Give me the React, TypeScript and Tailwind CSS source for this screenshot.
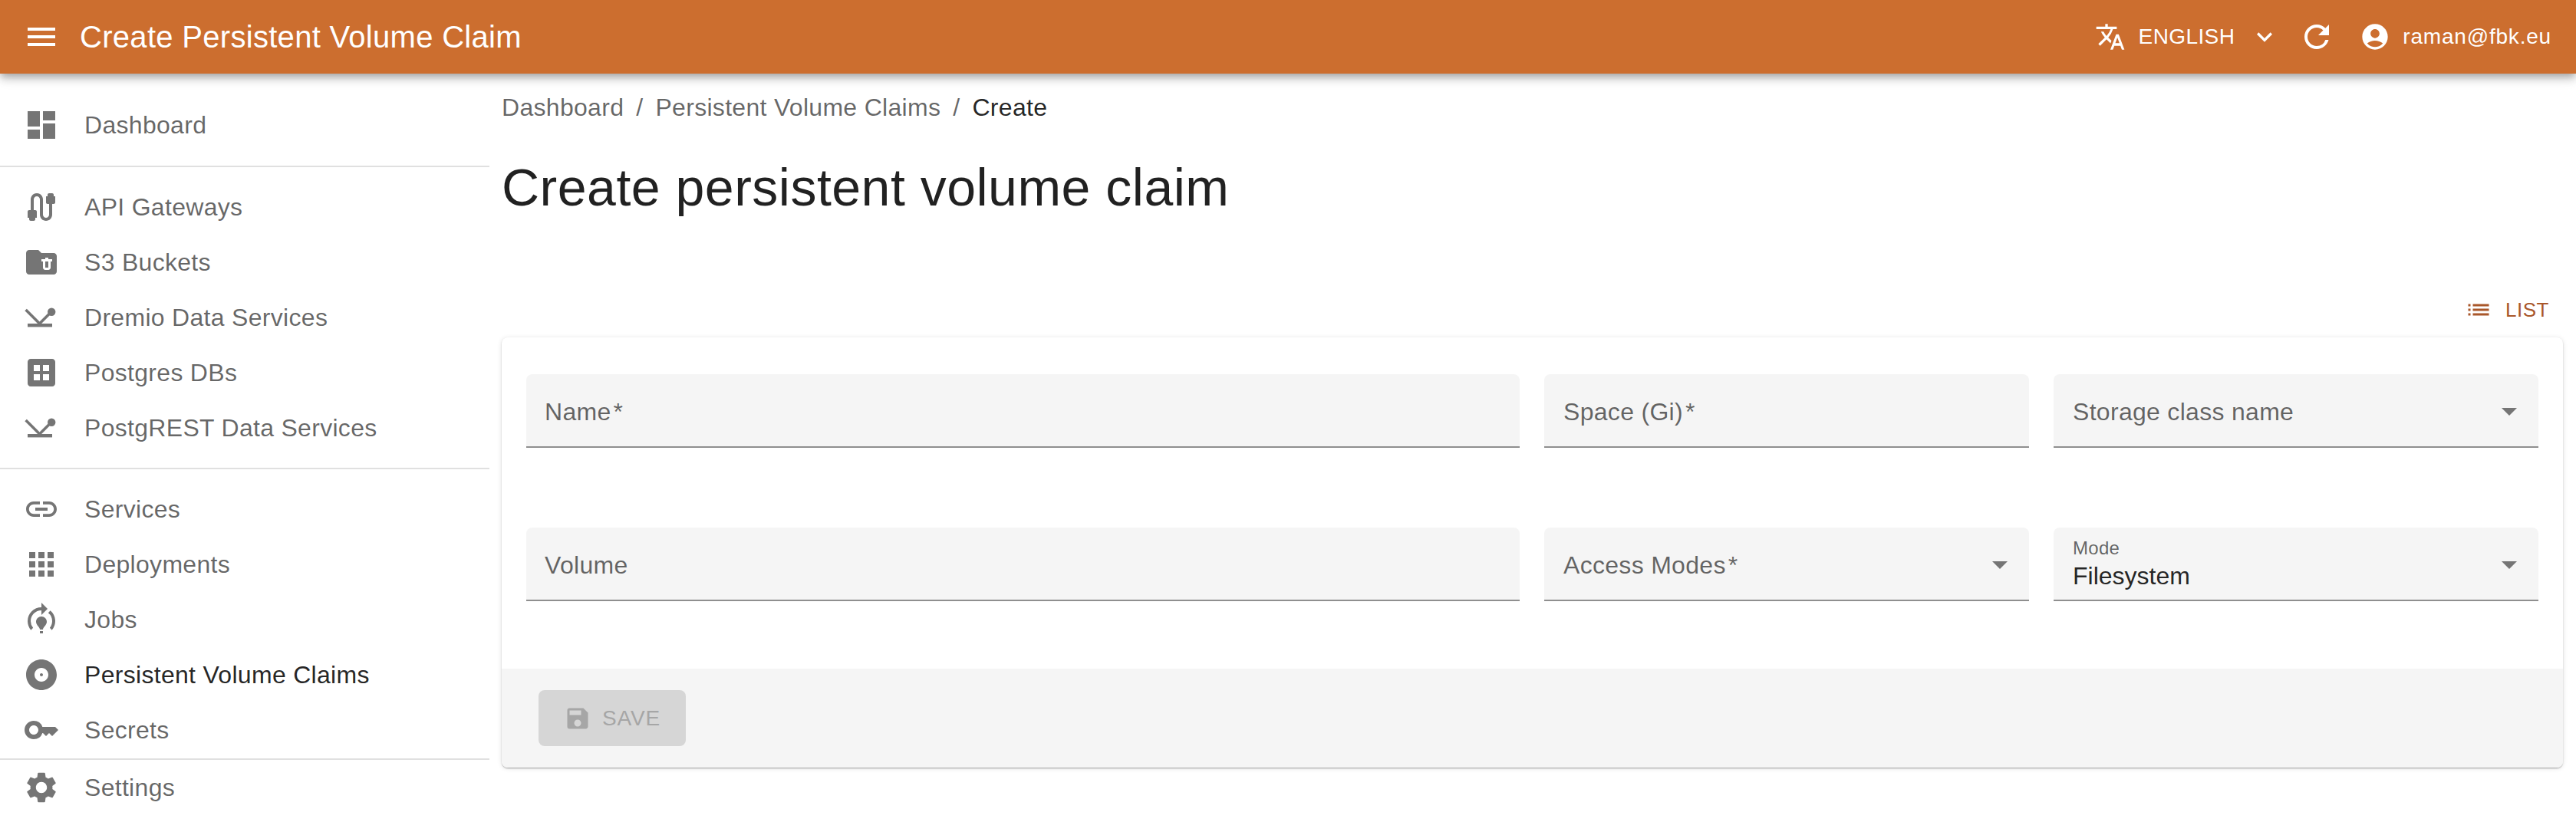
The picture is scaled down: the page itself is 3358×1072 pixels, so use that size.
import React from 'react';
import {
  MdMenu, MdTranslate, MdExpandMore, MdRefresh, MdAccountCircle, MdDashboard, MdCable, MdFolderDelete,
  MdDataset, MdLink, MdApps, MdModelTraining, MdAlbum, MdKey, MdSettings, MdList, MdSave, MdArrowDropDown,
} from 'react-icons/md';

const DataIcon = ({ className }: { className?: string }) => (
  <svg viewBox="0 0 24 24" fill="currentColor" className={className}>
    <path d="M1.8 7 10.8 16 18.4 8.4" fill="none" stroke="currentColor" strokeWidth="1.8" />
    <circle cx="18.6" cy="8.4" r="2.6" />
    <rect x="3" y="16" width="16" height="2.2" />
  </svg>
);

const Separator = () => <div className="h-[2px] w-[638px] bg-[#e0e0e0]" />;

const NavItem = ({ icon: Icon, label, active }: { icon: React.ComponentType<{ className?: string }>; label: string; active?: boolean }) => (
  <div className={`flex h-[72px] items-center pl-[30px] text-[32px] tracking-[0.3px] ${active ? 'text-[#000000de]' : 'text-[#00000099]'}`}>
    <Icon className="h-[48px] w-[48px] shrink-0 text-[#757575]" />
    <span className="ml-[32px]">{label}</span>
  </div>
);

const Field = ({ label, small, value, select, className }: { label: string; small?: string; value?: string; select?: boolean; className?: string }) => (
  <div className={`relative h-[96px] rounded-t-[8px] border-b-2 border-[#8f8f8f] bg-[#f5f5f5] ${className ?? 'pl-[24px]'}`}>
    {small ? (
      <div className="flex h-full flex-col pt-[11px]">
        <span className="text-[24px] leading-[32px] tracking-[0.3px] text-[#00000099]">{small}</span>
        <span className="text-[32px] leading-[40px] text-[#000000de]">{value}</span>
      </div>
    ) : (
      <div className="flex h-full items-center pt-[3px] text-[32px] tracking-[0.3px] text-[#00000099]">{label}</div>
    )}
    {select && <MdArrowDropDown className="absolute right-[14px] top-[24px] h-[48px] w-[48px] text-[#757575]" />}
  </div>
);

export default function App() {
  return (
    <div className="flex h-[1072px] w-[3358px] flex-col overflow-hidden bg-white font-['Liberation_Sans',Arial,sans-serif]">
      <header className="relative z-10 flex h-[96px] shrink-0 items-center bg-[#cc6e2f] pl-[30px] pr-[32px] text-white shadow-[0_4px_8px_-2px_rgba(0,0,0,0.2),0_8px_10px_0_rgba(0,0,0,0.14),0_2px_20px_0_rgba(0,0,0,0.12)]">
        <MdMenu className="h-[48px] w-[48px]" />
        <h1 className="ml-[26px] text-[40px] tracking-[0.3px]">Create Persistent Volume Claim</h1>
        <div className="ml-auto flex items-center">
          <MdTranslate className="h-[40px] w-[40px]" />
          <span className="ml-[17px] text-[28px] tracking-[0.4px]">ENGLISH</span>
          <MdExpandMore className="ml-[19px] h-[40px] w-[40px]" />
          <MdRefresh className="ml-[24px] h-[48px] w-[48px]" />
          <MdAccountCircle className="ml-[32px] h-[40px] w-[40px]" />
          <span className="ml-[16px] text-[28px] tracking-[0.8px]">raman@fbk.eu</span>
        </div>
      </header>
      <div className="flex min-h-0 flex-1">
        <aside className="w-[640px] shrink-0">
          <div className="pt-[31px]">
            <NavItem icon={MdDashboard} label="Dashboard" />
          </div>
          <div className="mt-[17px]"><Separator /></div>
          <div className="pt-[16px]">
            <NavItem icon={MdCable} label="API Gateways" />
            <NavItem icon={MdFolderDelete} label="S3 Buckets" />
            <NavItem icon={DataIcon} label="Dremio Data Services" />
            <NavItem icon={MdDataset} label="Postgres DBs" />
            <NavItem icon={DataIcon} label="PostgREST Data Services" />
          </div>
          <div className="mt-[16px]"><Separator /></div>
          <div className="pt-[16px]">
            <NavItem icon={MdLink} label="Services" />
            <NavItem icon={MdApps} label="Deployments" />
            <NavItem icon={MdModelTraining} label="Jobs" />
            <NavItem icon={MdAlbum} label="Persistent Volume Claims" active />
            <NavItem icon={MdKey} label="Secrets" />
          </div>
          <div className="mt-[1px]"><Separator /></div>
          <NavItem icon={MdSettings} label="Settings" />
        </aside>
        <main className="min-w-0 flex-1 pl-[14px] pr-[17px]">
          <nav className="mt-[21px] flex h-[38px] items-center pt-[8px] text-[32px] tracking-[0.3px] text-[#00000099]">
            <span>Dashboard</span>
            <span className="mx-[16px]">/</span>
            <span>Persistent Volume Claims</span>
            <span className="mx-[16px]">/</span>
            <span className="text-[#000000de]">Create</span>
          </nav>
          <h2 className="mt-[49px] text-[68px] leading-[80px] tracking-[0.5px] text-[#000000de]">Create persistent volume claim</h2>
          <div className="mt-[96px] flex h-[48px] items-center justify-end pr-[18px] text-[26px] tracking-[0.5px] text-[#a9572a]">
            <MdList className="mr-[17px] h-[36px] w-[36px]" />
            <span>LIST</span>
          </div>
          <section className="mt-[12px] h-[561px] rounded-[8px] bg-white shadow-[0_2px_2px_-1px_rgba(0,0,0,0.2),0_1px_2px_0_rgba(0,0,0,0.14),0_1px_6px_0_rgba(0,0,0,0.12)]">
            <div className="grid grid-cols-[1295px_632px_632px] gap-x-[32px] gap-y-[104px] px-[32px] pt-[48px]">
              <Field label={'Name\u200a*'} />
              <Field label={'Space (Gi)\u200a*'} className="pl-[25px]" />
              <Field label="Storage class name" select className="pl-[25px]" />
              <Field label="Volume" />
              <Field label={'Access Modes\u200a*'} select className="pl-[25px]" />
              <Field label="Mode" small="Mode" value="Filesystem" select className="pl-[25px]" />
            </div>
            <div className="mt-[88px] flex h-[129px] items-center rounded-b-[8px] bg-[#f5f5f5] pl-[48px]">
              <div className="flex h-[73px] w-[192px] items-center justify-center rounded-[8px] bg-[#d6d6d6] text-[28px] tracking-[0.8px] text-[#a6a6a6]">
                <MdSave className="mr-[14px] h-[36px] w-[36px]" />
                <span>SAVE</span>
              </div>
            </div>
          </section>
        </main>
      </div>
    </div>
  );
}
